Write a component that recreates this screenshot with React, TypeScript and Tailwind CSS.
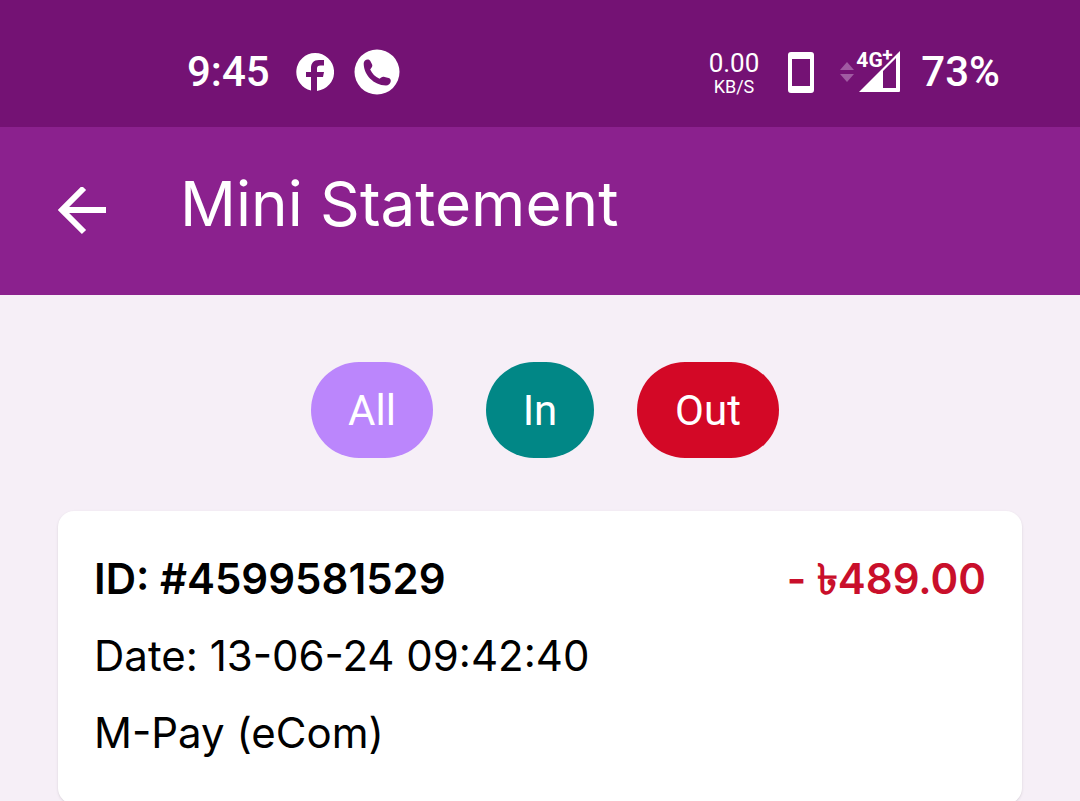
import { useState } from "react";
import { clsx } from "clsx";

type Direction = "in" | "out";
type Filter = "all" | Direction;

interface Transaction {
  id: string;
  date: string;
  channel: string;
  amount: string;
  direction: Direction;
}

const transactions: Transaction[] = [
  {
    id: "4599581529",
    date: "13-06-24 09:42:40",
    channel: "M-Pay (eCom)",
    amount: "489.00",
    direction: "out",
  },
];

const filters: { key: Filter; label: string; className: string }[] = [
  { key: "all", label: "All", className: "mx-[10px] min-w-[122px] bg-[#bb86fc]" },
  { key: "in", label: "In", className: "min-w-[108px] bg-[#018786]" },
  { key: "out", label: "Out", className: "min-w-[142px] bg-[#d30826]" },
];

function FacebookIcon() {
  return (
    <svg viewBox="0 0 38 38" className="h-[38px] w-[38px]" aria-hidden="true">
      <path
        fill="currentColor"
        d="M19 0a19 19 0 0 0-4 37.500V24h-5v-5h5v-3.500C15 10 17.500 7 23 7h5v5.500h-3.500c-2.500 0-3.500 1-3.500 3V19h7l-1 5h-6v13.900A19 19 0 0 0 19 0Z"
      />
    </svg>
  );
}

function CallIcon() {
  return (
    <svg viewBox="0 0 46 46" className="h-[46px] w-[46px]" aria-hidden="true">
      <circle cx="23" cy="23" r="22.500" fill="currentColor" />
      <path
        fill="#741274"
        d="M11 11.500c1.500-1.500 4-1.500 5.200.3l1.800 3.500c.6 1.300.4 2.400-.6 3.500l-1.200 1.700c1.800 4 5 7.300 9.300 9.200l1.700-1.200c1-.8 2.200-1 3.400-.5l4 1c1.800.6 2.600 2.200 2 4-.8 2.300-2.300 3.500-4.600 3.500C19.500 36 10 26 9.700 15c0-1.400.4-2.600 1.300-3.500Z"
      />
    </svg>
  );
}

function PhoneIcon() {
  return (
    <svg viewBox="0 0 28 42" className="h-[42px] w-7" aria-hidden="true">
      <path
        fill="currentColor"
        fillRule="evenodd"
        d="M4 1h20a3 3 0 0 1 3 3v35a3 3 0 0 1-3 3H4a3 3 0 0 1-3-3V4a3 3 0 0 1 3-3Zm1 7v27h18V8Z"
      />
    </svg>
  );
}

function SignalIcon() {
  return (
    <div className="relative h-[42px] w-[62px]">
      <svg viewBox="0 0 62 42" className="h-[42px] w-[62px]" aria-hidden="true">
        <path fill="#a05aa2" d="M1 19 8 11l7 8ZM1 23h14l-7 8Z" />
        <path
          fill="currentColor"
          fillRule="evenodd"
          d="M20 41 61 0v40a1 1 0 0 1-1 1ZM44 20v17h13V7Z"
        />
      </svg>
      <span className="absolute -top-[3px] left-[17px] text-[21px] leading-6 font-bold">
        4G
        <span className="absolute -top-[5px] left-[26px] text-[19px]">+</span>
      </span>
    </div>
  );
}

function StatusBar() {
  return (
    <div className="flex h-[127px] shrink-0 items-center justify-between bg-[#741274] pt-4 pr-20 pl-[187px] font-[Roboto,sans-serif] text-[42px] font-medium text-white">
      <div className="flex items-center">
        <span>9:45</span>
        <div className="ml-[26px] flex items-center gap-5">
          <FacebookIcon />
          <CallIcon />
        </div>
      </div>
      <div className="flex items-center">
        <div className="pt-1 text-center font-normal">
          <div className="text-[26px] leading-[25px]">0.00</div>
          <div className="text-[18px] leading-[21px]">KB/S</div>
        </div>
        <div className="mr-5 ml-7 flex items-center gap-6">
          <PhoneIcon />
          <SignalIcon />
        </div>
        <span>73%</span>
      </div>
    </div>
  );
}

function TransactionCard({ tx }: { tx: Transaction }) {
  const isOut = tx.direction === "out";
  return (
    <article className="flex flex-col gap-[14px] rounded-2xl bg-white px-9 pt-9 pb-10 text-[42px] leading-[63px] text-black shadow-sm">
      <div className="flex items-center justify-between font-semibold">
        <h2>ID: #{tx.id}</h2>
        <p className={clsx(isOut ? "text-[#c90f2b]" : "text-[#018786]")}>
          {isOut ? "-" : "+"} ৳{tx.amount}
        </p>
      </div>
      <p>Date: {tx.date}</p>
      <p>{tx.channel}</p>
    </article>
  );
}

export default function App() {
  const [filter, setFilter] = useState<Filter>("all");
  const visible = transactions.filter((tx) => filter === "all" || tx.direction === filter);

  return (
    <div className="flex h-screen flex-col overflow-hidden bg-[#f6eff7] font-[Inter,sans-serif]">
      <StatusBar />

      <header className="flex h-[168px] shrink-0 items-center gap-[74px] bg-[#8b218e] pl-[58px] text-white">
        <button type="button" aria-label="Back">
          <svg viewBox="0 0 48 48" className="h-12 w-12" aria-hidden="true">
            <path
              fill="none"
              stroke="currentColor"
              strokeWidth="6"
              d="M48 23H5M26 1 4 23l22 22"
            />
          </svg>
        </button>
        <h1 className="pb-[14px] text-[62px] leading-[72px]">Mini Statement</h1>
      </header>

      <main className="flex-1 overflow-y-auto px-[58px] pt-[67px] [scrollbar-width:none]">
        <div className="flex justify-center gap-[43px] font-[Roboto,sans-serif]">
          {filters.map((f) => (
            <button
              key={f.key}
              type="button"
              aria-pressed={filter === f.key}
              onClick={() => setFilter(f.key)}
              className={clsx("h-24 rounded-full px-8 text-[42px] text-white", f.className)}
            >
              {f.label}
            </button>
          ))}
        </div>

        <section className="mt-[53px] flex flex-col gap-9 pb-9">
          {visible.map((tx) => (
            <TransactionCard key={tx.id} tx={tx} />
          ))}
        </section>
      </main>
    </div>
  );
}
